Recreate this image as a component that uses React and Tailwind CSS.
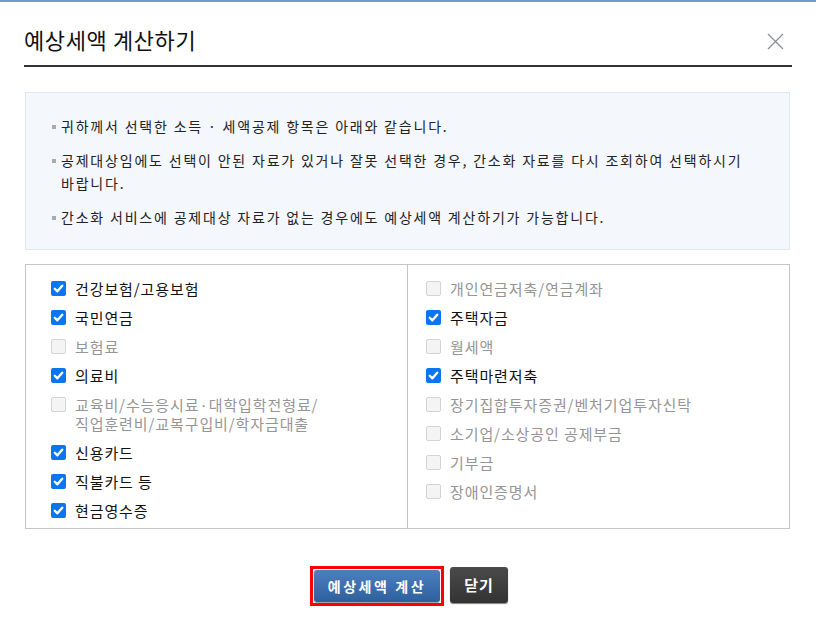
import { useState } from "react";

const leftItems = [
  { label: "건강보험/고용보험", on: true },
  { label: "국민연금", on: true },
  { label: "보험료", on: false },
  { label: "의료비", on: true },
  { label: "교육비/수능응시료·대학입학전형료/\n직업훈련비/교복구입비/학자금대출", on: false },
  { label: "신용카드", on: true },
  { label: "직불카드 등", on: true },
  { label: "현금영수증", on: true },
];

const rightItems = [
  { label: "개인연금저축/연금계좌", on: false },
  { label: "주택자금", on: true },
  { label: "월세액", on: false },
  { label: "주택마련저축", on: true },
  { label: "장기집합투자증권/벤처기업투자신탁", on: false },
  { label: "소기업/소상공인 공제부금", on: false },
  { label: "기부금", on: false },
  { label: "장애인증명서", on: false },
];

function Box({ on }) {
  if (on) {
    return (
      <span className="mt-[2px] flex h-[15px] w-[15px] shrink-0 items-center justify-center rounded-[2px] bg-[#0a75f2]">
        <svg width="11" height="11" viewBox="0 0 10 10">
          <path d="M1.6 5.2 L4 7.6 L8.4 2.4" fill="none" stroke="#fff" strokeWidth="2.1" strokeLinecap="round" strokeLinejoin="round" />
        </svg>
      </span>
    );
  }
  return <span className="mt-[2px] h-[15px] w-[15px] shrink-0 rounded-[2px] border border-[#d4d4d4] bg-[#f4f4f4]" />;
}

function Item({ label, on }) {
  return (
    <div className="flex items-start gap-[9px]">
      <Box on={on} />
      <span className={`whitespace-pre text-[15px] leading-[19px] tracking-[0.9px] ${on ? "text-[#111]" : "text-[#959595]"}`}>
        {label}
      </span>
    </div>
  );
}

export default function App() {
  const [open] = useState(true);
  if (!open) return null;

  return (
    <div className="h-[626px] w-[816px] border-t-2 border-[#6f9bd0] bg-white font-['Noto_Sans_CJK_KR','Noto_Sans',sans-serif]">
      <div className="mx-6 flex h-[65px] items-end justify-between border-b-2 border-[#333] pb-[15px]">
        <h1 className="text-[22px] leading-none tracking-[0.6px] text-[#111]">예상세액 계산하기</h1>
        <svg width="17" height="17" viewBox="0 0 17 17" className="mr-[8px]">
          <path d="M1 1 L16 16 M16 1 L1 16" stroke="#8a8f99" strokeWidth="1.3" />
        </svg>
      </div>

      <div className="ml-[25px] mr-[26px] mt-[25px] border border-[#dfe7f1] bg-[#f4f7fc] pb-[20px] pl-[26px] pr-[20px] pt-[22px] text-[14px] leading-[23px] tracking-[1.8px] text-[#222] break-keep">
        <ul className="flex flex-col gap-[11px]">
          <li className="flex gap-[5px]">
            <span className="mt-[10px] h-[4px] w-[4px] shrink-0 bg-[#aaa]" />
            <span>귀하께서 선택한 소득 · 세액공제 항목은 아래와 같습니다.</span>
          </li>
          <li className="flex gap-[5px]">
            <span className="mt-[10px] h-[4px] w-[4px] shrink-0 bg-[#aaa]" />
            <span>공제대상임에도 선택이 안된 자료가 있거나 잘못 선택한 경우, 간소화 자료를 다시 조회하여 선택하시기 바랍니다.</span>
          </li>
          <li className="flex gap-[5px]">
            <span className="mt-[10px] h-[4px] w-[4px] shrink-0 bg-[#aaa]" />
            <span>간소화 서비스에 공제대상 자료가 없는 경우에도 예상세액 계산하기가 가능합니다.</span>
          </li>
        </ul>
      </div>

      <div className="ml-[25px] mr-[26px] mt-[14px] grid h-[265px] grid-cols-[382px_1fr] border border-[#c4c4c4]">
        <div className="flex flex-col gap-[10px] border-r border-[#c4c4c4] pl-[25px] pt-[14px]">
          {leftItems.map((it) => (
            <Item key={it.label} {...it} />
          ))}
        </div>
        <div className="flex flex-col gap-[10px] pl-[18px] pt-[14px]">
          {rightItems.map((it) => (
            <Item key={it.label} {...it} />
          ))}
        </div>
      </div>

      <div className="mt-[37px] flex justify-center gap-[6px] pl-[2px]">
        <div className="border-[3px] border-[#f00] p-[1px]">
          <button className="h-[32px] w-[126px] rounded-[3px] bg-gradient-to-b from-[#4d80bf] to-[#2e5f9d] text-[14px] font-bold tracking-[2.6px] text-white shadow-[0_1px_1px_rgba(0,0,0,0.4)]">
            예상세액 계산
          </button>
        </div>
        <button className="mt-[1px] h-[36px] w-[58px] rounded-[3px] bg-gradient-to-b from-[#4a4a4a] to-[#333] text-[15px] font-bold tracking-[1px] text-white shadow-[0_1px_1px_rgba(0,0,0,0.5)]">
          닫기
        </button>
      </div>
    </div>
  );
}
